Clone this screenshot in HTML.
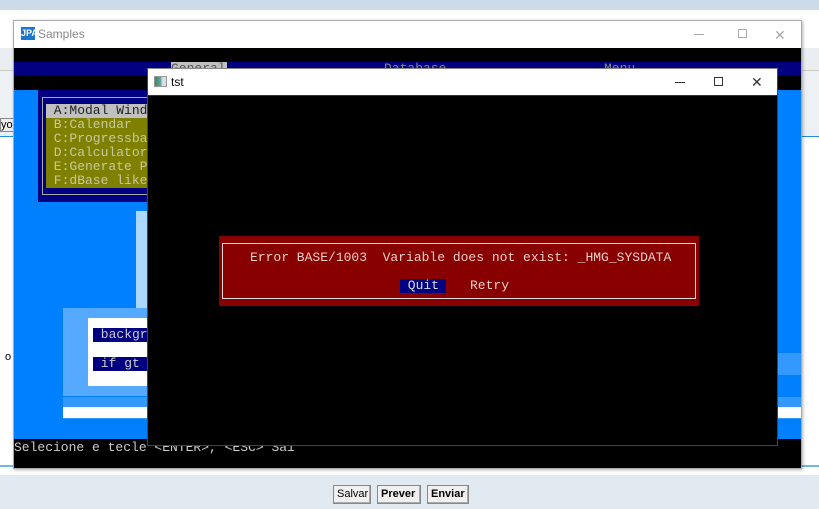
<!DOCTYPE html>
<html><head><style>
*{margin:0;padding:0;box-sizing:border-box}
body{width:819px;height:509px;position:relative;overflow:hidden;background:#fff;font-family:"Liberation Sans",sans-serif}
.a{position:absolute}
.m{font-family:"Liberation Mono",monospace;font-size:13px;line-height:14px;white-space:pre}
.btn{position:absolute;top:485px;height:19px;border:1px solid #888;background:#f0f0f0;font-size:11px;line-height:17px;padding:0 3px;box-shadow:inset -1px -1px 0 #aaa}
</style></head><body>
<div class="a" style="left:0;top:0;width:819px;height:10px;background:#cbdbea"></div>
<div class="a" style="left:0;top:48px;width:819px;height:22px;background:#eaeef1"></div>
<div class="a" style="left:0;top:70px;width:819px;height:66px;background:#edf1f4;border-top:1px solid #ccc"></div>
<div class="a" style="left:0;top:136px;width:819px;height:1px;background:#1e8fe0"></div>
<div class="a" style="left:0;top:118px;width:14px;height:14px;border:1px solid #888;background:#eee;font-size:11px;line-height:12px">you</div>
<div class="a" style="left:5px;top:351px;font-size:11px">o</div>
<div class="a" style="left:0;top:465px;width:819px;height:2px;background:#6cb8e8"></div>
<div class="a" style="left:0;top:475px;width:819px;height:34px;background:#e1eaf1"></div>
<div class="btn" style="left:333px;width:38px">Salvar</div>
<div class="btn" style="left:377px;width:44px;font-weight:bold">Prever</div>
<div class="btn" style="left:427px;width:42px;font-weight:bold">Enviar</div>

<!-- Samples window -->
<div class="a" style="left:13px;top:20px;width:789px;height:449px;border:1px solid #aaa;background:#000;box-shadow:1px 1px 3px rgba(0,0,0,.3)">
 <div class="a" style="left:0;top:0;width:787px;height:27px;background:#fff"></div>
 <div class="a" style="left:7px;top:6px;width:14px;height:13px;background:#1b76d1;color:#fff;font-size:9px;font-weight:bold;line-height:13px;text-align:center">JPA</div>
 <div class="a" style="left:24px;top:6px;font-size:12px;color:#888">Samples</div>
 <div class="a" style="left:680px;top:13px;width:10px;height:1px;background:#aaa"></div>
 <div class="a" style="left:724px;top:8px;width:9px;height:9px;border:1px solid #aaa"></div>
 <div class="a" style="left:760px;top:6px;color:#aaa;font-size:14px">✕</div>
 <div class="a" style="left:0;top:41px;width:787px;height:14px;background:#000080"></div>
 <div class="a m" style="left:157px;top:41px;background:#c0c0c0;color:#555;width:56px;height:14px">General</div>
 <div class="a m" style="left:370px;top:41px;color:#888">Database</div>
 <div class="a m" style="left:590px;top:41px;color:#888">Menu</div>
 <div class="a" style="left:0;top:69px;width:787px;height:349px;background:#0080ff"></div>
 <div class="a" style="left:122px;top:190px;width:20px;height:140px;background:#aad8ff"></div>
 <div class="a" style="left:49px;top:287px;width:90px;height:88px;background:#55aaff"></div>
 <div class="a" style="left:74px;top:297px;width:70px;height:68px;background:#fff"></div>
 <div class="a m" style="left:79px;top:307px;width:60px;background:#000080;color:#ccc"> backgr</div>
 <div class="a m" style="left:79px;top:336px;width:60px;background:#000080;color:#ccc"> if gt</div>
 <div class="a" style="left:49px;top:376px;width:90px;height:22px;background:#3399ff"></div>
 <div class="a" style="left:49px;top:386px;width:90px;height:11px;background:#fff"></div>
 <div class="a" style="left:764px;top:332px;width:23px;height:22px;background:#3399ff"></div>
 <div class="a" style="left:764px;top:376px;width:23px;height:22px;background:#3399ff"></div>
 <div class="a" style="left:764px;top:386px;width:23px;height:11px;background:#fff"></div>
 <div class="a" style="left:24px;top:69px;width:120px;height:112px;background:#000080"></div>
 <div class="a" style="left:28px;top:76px;width:116px;height:98px;border:1px solid #aaa;border-right:none"></div>
 <div class="a" style="left:32px;top:83px;width:112px;height:84px;background:#808000"></div>
 <div class="a m" style="left:32px;top:83px;width:112px;background:#c0c0c0;color:#222"> A:Modal Window</div>
 <div class="a m" style="left:32px;top:97px;color:#c8c8a0;line-height:14px"> B:Calendar
 C:Progressbar
 D:Calculator
 E:Generate P
 F:dBase like</div>
 <div class="a m" style="left:0;top:420px;color:#ccc">Selecione e tecle &lt;ENTER&gt;, &lt;ESC&gt; Sai</div>
</div>

<!-- tst window -->
<div class="a" style="left:147px;top:68px;width:631px;height:378px;background:#000;border:1px solid #444;border-top:1px solid #888">
 <div class="a" style="left:0;top:0;width:629px;height:27px;background:#fff;border-bottom:1px solid #333"></div>
 <div class="a" style="left:6px;top:7px;width:13px;height:11px;background:linear-gradient(90deg,#3a8a6a,#6aa 60%,#ddd 60%);border:1px solid #999"></div>
 <div class="a" style="left:23px;top:6px;font-size:12px;color:#000">tst</div>
 <div class="a" style="left:527px;top:13px;width:10px;height:1px;background:#333"></div>
 <div class="a" style="left:566px;top:8px;width:9px;height:9px;border:1px solid #333"></div>
 <div class="a" style="left:603px;top:5px;color:#333;font-size:14px">✕</div>
 <div class="a" style="left:71px;top:167px;width:480px;height:70px;background:#880000"></div>
 <div class="a" style="left:74px;top:174px;width:474px;height:56px;border:1px solid #ddd"></div>
 <div class="a m" style="left:102px;top:182px;color:#e8d0c8">Error BASE/1003  Variable does not exist: _HMG_SYSDATA</div>
 <div class="a m" style="left:252px;top:210px;width:46px;background:#000080;color:#ddd"> Quit</div>
 <div class="a m" style="left:322px;top:210px;color:#e8d0c8">Retry</div>
</div>
</body></html>
